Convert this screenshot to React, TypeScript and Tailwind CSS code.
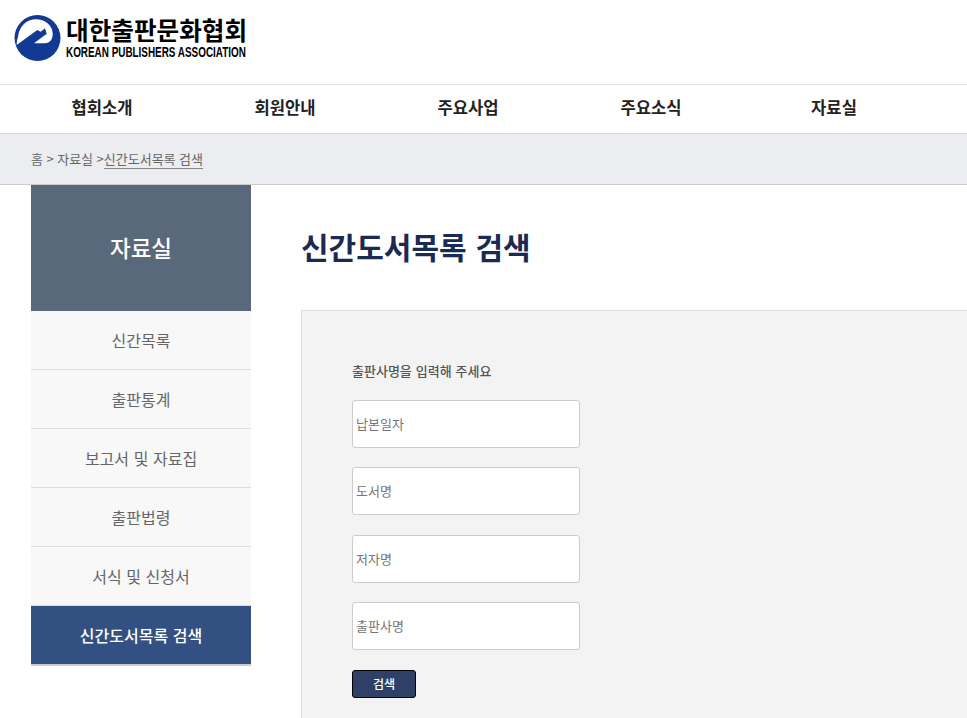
const navItems = ['협회소개', '회원안내', '주요사업', '주요소식', '자료실'];
const sideItems = ['신간목록', '출판통계', '보고서 및 자료집', '출판법령', '서식 및 신청서'];
const fields = ['납본일자', '도서명', '저자명', '출판사명'];

function Logo() {
  return (
    <div className="flex items-start gap-[4px]">
      <svg width="48" height="46" viewBox="0 0 48 46" className="shrink-0 mt-px">
        <circle cx="23.5" cy="23" r="23" fill="#123a95" />
        <path d="M4 22C5 12 12 4.5 21 4.3C30 3.8 38.5 10 38.7 18.3C39 24 36 28.3 31 28.3L20 28.3L31 20L32.7 19L31 13.3L26.7 16.7L23.3 15L2.7 30C2.8 27 3 25 4 22Z" fill="#fff" />
      </svg>
      <div className="flex flex-col text-black">
        <span className="text-[24.6px] leading-[30px] font-bold whitespace-nowrap font-['Noto_Sans_CJK_KR',sans-serif]">대한출판문화협회</span>
        <span className="mt-px w-[180px] text-[15px] leading-[14px] font-bold whitespace-nowrap scale-x-[0.66] origin-left font-['Liberation_Sans',sans-serif]">KOREAN PUBLISHERS ASSOCIATION</span>
      </div>
    </div>
  );
}

export default function App() {
  return (
    <div className="h-[718px] overflow-hidden bg-white font-['Noto_Sans_CJK_KR','Noto_Sans',sans-serif]">
      <header className="h-[85px] border-b border-[#dddddd] pl-[14px] pt-[14px]">
        <Logo />
      </header>

      <nav className="h-[49px] flex pl-[11px] border-b border-[#d8d8d8]">
        {navItems.map(item => (
          <a key={item} className="w-[183px] flex items-center justify-center pb-[4px] pr-[1px] text-[16.6px] font-bold text-[#222222]">
            {item}
          </a>
        ))}
      </nav>

      <div className="h-[51px] flex items-center pl-[31px] bg-[#ecedf1] border-b border-[#cccccc] text-[13px] text-[#666666] [word-spacing:0.6px]">
        <span className="whitespace-pre">홈 &gt; 자료실 &gt;</span>
        <span className="border-b border-[#888888] leading-[18px]">신간도서목록 검색</span>
      </div>

      <div className="flex pl-[31px]">
        <aside className="w-[220px] shrink-0">
          <div className="h-[126px] flex items-center justify-center bg-[#5a687c] text-[22.5px] font-medium text-white">
            자료실
          </div>
          <ul className="border-b-2 border-[#cccccc]">
            {sideItems.map(item => (
              <li key={item} className="h-[59px] flex items-center justify-center bg-[#f8f8f8] border-b border-[#dddddd] text-base text-[#666666] [word-spacing:1px]">
                {item}
              </li>
            ))}
            <li className="h-[58px] flex items-center justify-center bg-[#335083] text-base font-medium text-white [word-spacing:1px]">
              신간도서목록 검색
            </li>
          </ul>
        </aside>

        <main className="flex-1 pl-[50px]">
          <h1 className="h-[125px] pt-[39px] text-[30px] leading-[44px] font-bold text-[#1b2a52] [word-spacing:2px]">신간도서목록 검색</h1>
          <section className="h-[420px] bg-[#f3f3f3] border-l border-t border-[#dddddd] pl-[50px] pt-[50px]">
            <p className="text-[13px] leading-[20px] font-medium text-[#555555] [word-spacing:1px]">출판사명을 입력해 주세요</p>
            <div className="mt-[19px] flex flex-col gap-[19.4px]">
              {fields.map(field => (
                <input
                  key={field}
                  placeholder={field}
                  className="w-[228px] h-[48px] pl-[3px] pr-[4px] pb-[1px] bg-white border border-[#cccccc] rounded-[3px] text-[13px] placeholder:text-[#757575] outline-none"
                />
              ))}
            </div>
            <button className="mt-[20px] block w-[64px] h-[28px] bg-[#2f4066] border border-black rounded-[3px] text-xs font-medium text-white">
              검색
            </button>
          </section>
        </main>
      </div>
    </div>
  );
}
